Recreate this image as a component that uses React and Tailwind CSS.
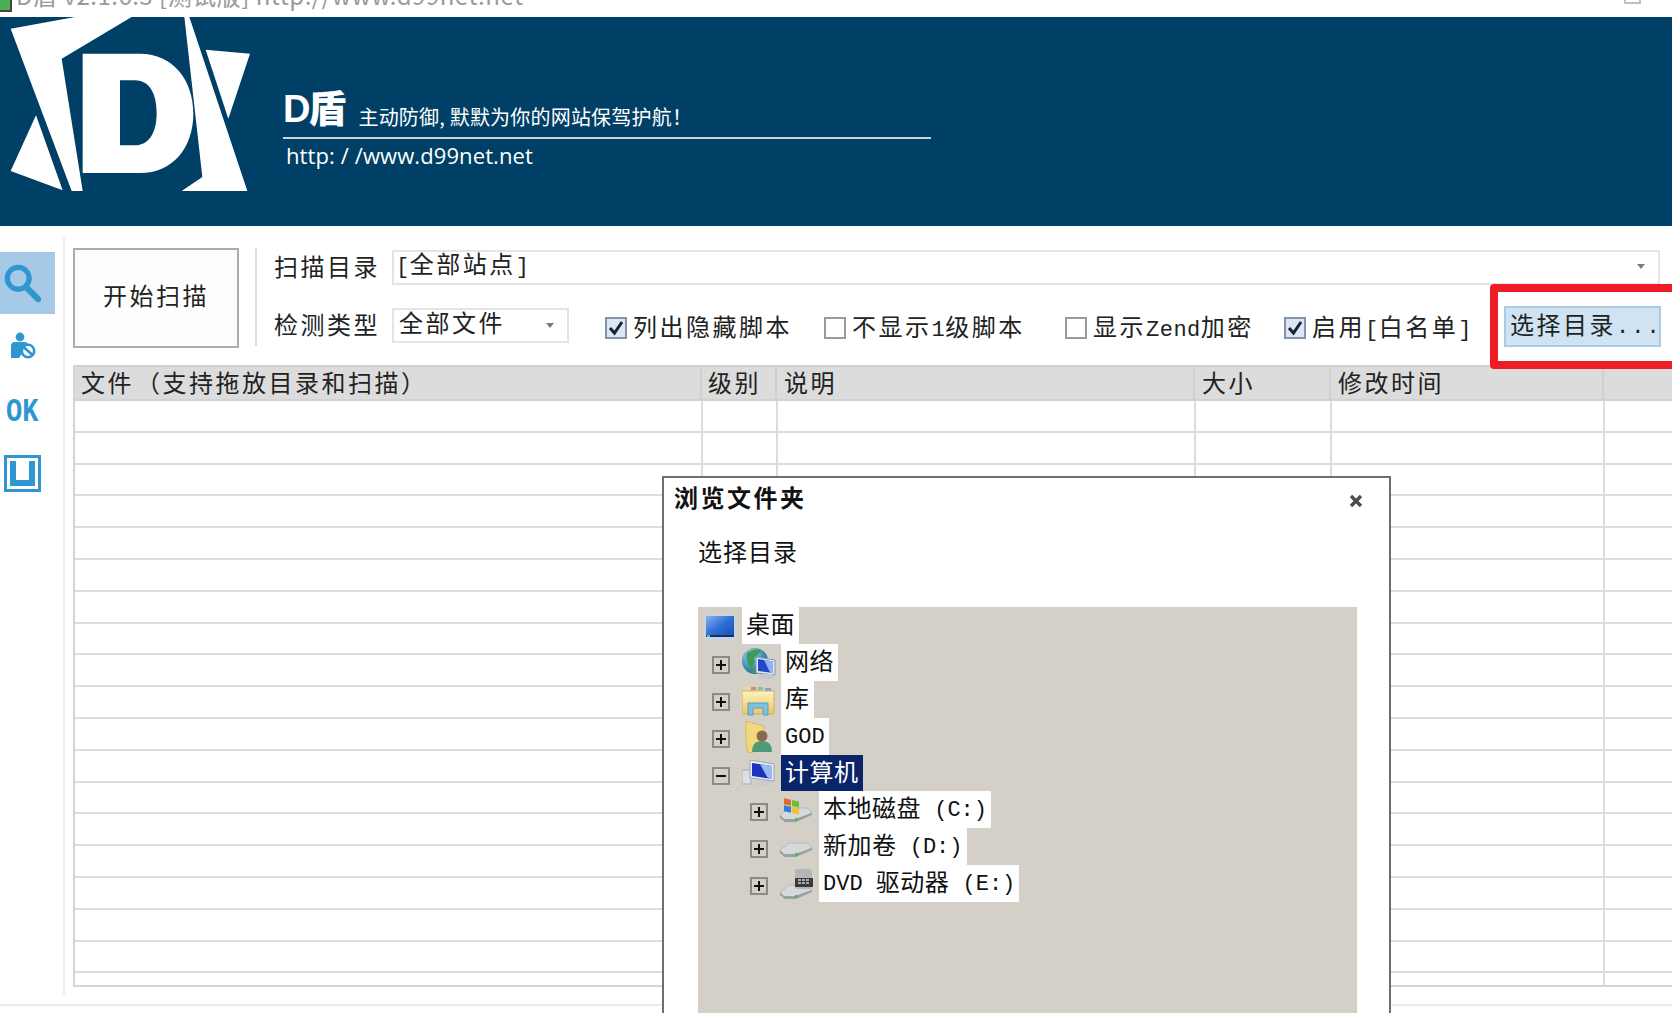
import React from "react";

const rows = Array.from({ length: 18 });

const Mono = ({ children, className = "" }) => (
  <span className={`text-[22px] tracking-[0.5px] whitespace-pre ${className}`}>{children}</span>
);

const Caret = () => (
  <svg width="10" height="6" viewBox="0 0 10 6">
    <polygon points="1,0 9,0 5,5" fill="#7a7a7a" />
  </svg>
);

const Combo = ({ className, children, textClass = "" }) => (
  <div className={`flex items-center justify-between border-2 border-[#e4e4e4] bg-white pl-[5px] ${className}`}>
    <span className={`whitespace-pre ${textClass}`}>{children}</span>
    <Caret />
  </div>
);

const Check = ({ checked, children, className }) => (
  <div className={`mt-[5px] flex items-center ${className}`}>
    {checked ? (
      <div className="flex h-[22px] w-[22px] shrink-0 items-center justify-center border-2 border-[#8593a8] bg-[#dde6f3]">
        <svg width="16" height="16" viewBox="0 0 16 16">
          <path d="M2 8 L6.5 13 L14 2" fill="none" stroke="#14243f" strokeWidth="3" />
        </svg>
      </div>
    ) : (
      <div className="h-[22px] w-[22px] shrink-0 border-2 border-[#9a9a9a] bg-white" />
    )}
    <span className="ml-[6px] whitespace-pre pt-[3px]">{children}</span>
  </div>
);

const DLogo = () => (
  <svg className="shrink-0" width="260" height="209" viewBox="0 50 780 627">
    <g fill="#fff">
      <polygon points="32,85 225,50 395,50 185,175 248,572 215,572" />
      <polygon points="108,345 32,512 188,570" />
      <path
        fillRule="evenodd"
        d="M248 160 H420 C520 160 580 240 580 340 C580 440 520 518 420 518 H248 Z M360 240 V435 H405 C445 435 470 400 470 338 C470 275 445 240 405 240 Z"
      />
      <polygon points="553,50 568,50 742,572 545,572 607,530" />
      <polygon points="617,148 750,160 685,355" />
    </g>
  </svg>
);

const SearchIcon = () => (
  <svg width="38" height="40" viewBox="0 0 40 42">
    <circle cx="16" cy="16" r="11.5" fill="none" stroke="#2f97d0" strokeWidth="5.5" />
    <path d="M25 26 L37 38" stroke="#2f97d0" strokeWidth="6.5" strokeLinecap="round" />
  </svg>
);

const UserBlockIcon = () => (
  <svg width="26" height="27" viewBox="0 0 26 27">
    <circle cx="10" cy="5" r="4.4" fill="#2f97d0" />
    <path d="M1 26 V14 Q1 10 5 10 H15 Q17 10 18 12 L9 26 Z" fill="#2f97d0" />
    <circle cx="18" cy="19" r="6.2" fill="#fff" stroke="#2f97d0" strokeWidth="2.6" />
    <path d="M13.5 15 L22.5 23" stroke="#2f97d0" strokeWidth="2.6" />
  </svg>
);

const BoxIcon = () => (
  <div className="flex h-[37px] w-[37px] items-center justify-center border-[3px] border-[#2f97d0]">
    <svg width="25" height="25" viewBox="0 0 25 25">
      <path d="M3 0 V22 H22 V0" fill="none" stroke="#2f97d0" strokeWidth="6" />
    </svg>
  </div>
);

const SignBox = ({ minus }) => (
  <svg className="mt-[5px] shrink-0" width="18" height="18" viewBox="0 0 18 18">
    <rect x="1" y="1" width="16" height="16" fill="#d4d0c8" stroke="#8c8a84" strokeWidth="2" />
    <path d="M4 9 H14" stroke="#111" strokeWidth="2" />
    {!minus && <path d="M9 4 V14" stroke="#111" strokeWidth="2" />}
  </svg>
);

const DesktopIcon = () => (
  <svg width="32" height="26" viewBox="0 0 32 26">
    <defs>
      <linearGradient id="dsk" x1="0" y1="0" x2="1" y2="1">
        <stop offset="0" stopColor="#8cb4ee" />
        <stop offset="0.5" stopColor="#2f6fd6" />
        <stop offset="1" stopColor="#1b4fae" />
      </linearGradient>
    </defs>
    <rect x="0.5" y="0.5" width="31" height="25" fill="#c6d6ea" />
    <rect x="2" y="2" width="28" height="20" fill="url(#dsk)" />
    <rect x="2" y="21" width="28" height="2" fill="#17305e" />
    <rect x="3" y="21" width="3" height="2" fill="#6cc46c" />
  </svg>
);

const NetworkIcon = () => (
  <svg width="34" height="34" viewBox="0 0 34 34">
    <defs>
      <radialGradient id="glb" cx="0.35" cy="0.3" r="0.8">
        <stop offset="0" stopColor="#8ad8f4" />
        <stop offset="1" stopColor="#0f5c8a" />
      </radialGradient>
    </defs>
    <circle cx="13" cy="14" r="13" fill="url(#glb)" />
    <path d="M5 6 Q12 1 19 3 Q15 9 12 11 Q14 16 9 21 Q3 15 5 6 Z" fill="#3f9a52" />
    <path d="M8 24 Q11 21 15 22 L13 27 Q10 27 8 24 Z" fill="#3f9a52" />
    <path d="M14 10 L33 13 V28 L14 26 Z" fill="#e2e8f1" stroke="#8595ab" strokeWidth="1" />
    <path d="M16 12 L31 14.5 V26 L16 24 Z" fill="#2148c8" />
    <path d="M22 13 L31 14.5 V26 L28 25.6 Z" fill="#93b2f2" />
    <path d="M18 27 H30 L33 32 H16 Z" fill="#c3c8cd" />
  </svg>
);

const LibraryIcon = () => (
  <svg width="33" height="31" viewBox="0 0 33 31">
    <defs>
      <linearGradient id="lib" x1="0" y1="0" x2="0" y2="1">
        <stop offset="0" stopColor="#fdf3bc" />
        <stop offset="1" stopColor="#e9c766" />
      </linearGradient>
    </defs>
    <rect x="2" y="1" width="6" height="4" fill="#e6d79a" />
    <rect x="9" y="2" width="5" height="3" fill="#d98a7a" />
    <rect x="16" y="2" width="5" height="3" fill="#8ac48a" />
    <rect x="23" y="3" width="6" height="3" fill="#7aa8d8" />
    <path d="M0 6 H32 V29 H0 Z" fill="url(#lib)" stroke="#cfb25c" strokeWidth="1" />
    <path d="M6 30 V18 H26 V30 H21 V23 H11 V30 Z" fill="#7fc0dc" stroke="#5a9dbd" strokeWidth="1" />
  </svg>
);

const UserFolderIcon = () => (
  <svg width="30" height="33" viewBox="0 0 30 33">
    <path d="M2 0 L20 5 V29 L4 32 Q1 20 2 0 Z" fill="#f2d77d" stroke="#d9b95c" strokeWidth="1" />
    <circle cx="18" cy="15" r="5.5" fill="#8a6a4e" />
    <path d="M8 31 Q8 20 18 20 Q28 20 28 31 Z" fill="#4f9a76" />
  </svg>
);

const ComputerIcon = () => (
  <svg width="34" height="30" viewBox="0 0 34 30">
    <rect x="0" y="10" width="9" height="14" fill="#dcdfe3" stroke="#a9adb2" strokeWidth="1" />
    <path d="M8 0 L32 4 V21 L8 18 Z" fill="#e8edf4" stroke="#9aa5b5" strokeWidth="1" />
    <path d="M10 3 L30 6 V19 L10 16 Z" fill="#1a33b8" />
    <path d="M18 4 L30 6 V19 L26 18.5 Z" fill="#9ab8f4" />
    <path d="M15 21 H27 L30 26 H13 Z" fill="#c8ccd0" />
  </svg>
);

const DriveBase = ({ y = 13 }) => (
  <g transform={`translate(0 ${y})`}>
    <path d="M0 9 L9 2 H28 L32 7 L15 14 H4 Z" fill="#d6d9dc" stroke="#b4b8bc" strokeWidth="1" />
    <path d="M0 9 V12 L5 16 H16 L32 9 V7 L15 13 H4 Z" fill="#98a0a2" />
    <rect x="15" y="12" width="3" height="3" fill="#58b858" />
  </g>
);

const DriveC = () => (
  <svg width="34" height="30" viewBox="0 0 34 30">
    <DriveBase y={10} />
    <g transform="translate(3 2) skewY(12)">
      <rect x="1" y="0" width="7" height="6" fill="#e06a2c" />
      <rect x="9" y="0" width="7" height="6" fill="#76b83c" />
      <rect x="1" y="7" width="7" height="6" fill="#2f80d0" />
      <rect x="9" y="7" width="7" height="6" fill="#eec230" />
    </g>
  </svg>
);

const DriveD = () => (
  <svg width="34" height="30" viewBox="0 0 34 30">
    <DriveBase y={8} />
  </svg>
);

const DriveDvd = () => (
  <svg width="34" height="34" viewBox="0 0 34 34">
    <DriveBase y={15} />
    <rect x="15" y="1" width="17" height="20" rx="3" fill="#b4b6b8" />
    <rect x="15" y="10" width="18" height="9" fill="#3a3a3a" />
    <path d="M18 12 H30 M18 15 H30" stroke="#d0d0d0" strokeWidth="1.5" strokeDasharray="3 1" />
  </svg>
);

const TreeRow = ({ indent, sign, minus, icon, label, selected, iconClass }) => (
  <div className={`flex h-[36.9px] items-center ${indent}`}>
    {sign && <SignBox minus={minus} />}
    <div className={`mt-[3px] flex shrink-0 items-center ${iconClass}`}>{icon}</div>
    <div
      className={`flex h-full items-center whitespace-pre px-[4px] pt-[3px] ${
        selected ? "bg-[#0a246a] text-white" : "bg-white text-[#111]"
      }`}
    >
      {label}
    </div>
  </div>
);

const TreeMono = ({ children }) => <span className="text-[22px] tracking-normal">{children}</span>;

const App = () => {
  return (
    <div className="relative h-[1013px] w-[1672px] overflow-hidden bg-white text-[24px] leading-none tracking-[2.5px] text-[#222] [font-family:'Liberation_Mono','Noto_Sans_CJK_SC',monospace]">
      {/* title bar, cut by the top of the shot */}
      <div className="flex h-[17px] items-start overflow-hidden">
        <div className="h-[12px] w-[12px] shrink-0 border-b-2 border-r-2 border-[#444] bg-[#4caf50]" />
        <div className="ml-[4px] -mt-[17px] whitespace-pre font-['Noto_Sans_CJK_SC'] text-[24px] tracking-[0.5px] text-[#9a9a9a]">
          D盾 v2.1.6.3 [测试版] http://www.d99net.net
        </div>
        <div className="ml-auto mr-[31px] h-[4px] w-[17px] border-x-2 border-b-2 border-[#c0c0c0]" />
      </div>

      {/* banner */}
      <div className="flex h-[209px] bg-[#003f66]">
        <DLogo />
        <div className="ml-[23px] flex w-[648px] flex-col">
          <div className="mt-[70px] flex h-[52px] items-end border-b-2 border-[#c8d6e0] pb-[9px] text-white">
            <span className="font-['Liberation_Sans','Noto_Sans_CJK_SC'] text-[38px] font-black tracking-[-2px]">D盾</span>
            <span className="mb-[1px] ml-[14px] font-['Noto_Sans_CJK_SC'] text-[20px] tracking-[0.2px]">主动防御, 默默为你的网站保驾护航！</span>
          </div>
          <div className="ml-[3px] mt-[5px] font-['Open_Sans'] text-[22px] tracking-[0.1px] text-white">http: / /www.d99net.net</div>
        </div>
      </div>

      <div className="flex pt-[11px]">
        {/* left icon rail */}
        <div className="flex h-[758px] w-[65px] shrink-0 flex-col border-r-2 border-[#ececec] pr-[8px] pt-[15px]">
          <div className="flex h-[62px] items-center bg-[#a5c9e6] pl-[3px]">
            <SearchIcon />
          </div>
          <div className="flex h-[62px] items-center pl-[10px]">
            <UserBlockIcon />
          </div>
          <div className="flex h-[66px] items-center pl-[6px] pt-[7px]">
            <span className="scale-y-[1.25] text-[27px] font-bold tracking-normal text-[#2f97d0]">OK</span>
          </div>
          <div className="flex h-[62px] items-center pl-[4px]">
            <BoxIcon />
          </div>
        </div>

        <div className="min-w-0 flex-1 pl-[8px] pt-[11px]">
          {/* scan controls */}
          <div className="flex">
            <div className="flex h-[100px] w-[166px] shrink-0 items-center justify-center border-2 border-[#acacac] bg-[#fdfdfd] pt-[1px]">开始扫描</div>
            <div className="ml-[16px] h-[98px] w-[2px] shrink-0 bg-[#dcdcdc]" />
            <div className="ml-[17px] flex-1">
              <div className="mt-[2px] flex h-[34px] items-center">
                <div className="w-[118px] shrink-0 pt-[5px]">扫描目录</div>
                <Combo className="h-[35px] w-[1268px] pr-[12px]" textClass="-ml-[3px]">
                  <Mono>[</Mono>全部站点<Mono>]</Mono>
                </Combo>
              </div>
              <div className="mt-[24px] flex h-[35px] items-center">
                <div className="w-[118px] shrink-0 pt-[5px]">检测类型</div>
                <Combo className="h-[35px] w-[177px] pr-[12px]">全部文件</Combo>
                <Check checked className="ml-[36px] w-[219px]">列出隐藏脚本</Check>
                <Check className="w-[241px]">
                  不显示<Mono>1</Mono>级脚本
                </Check>
                <Check className="w-[219px]">
                  显示<Mono>Zend</Mono>加密
                </Check>
                <Check checked className="w-[220px]">
                  启用<Mono>[</Mono>白名单<Mono>]</Mono>
                </Check>
                <div className="mt-[2px] flex h-[41px] w-[157px] shrink-0 items-center whitespace-pre border-2 border-[#a9cbe8] bg-[#cfe3f3] pl-[4px] pt-[3px]">
                  选择目录<Mono className="tracking-[2px]">...</Mono>
                </div>
              </div>
            </div>
          </div>

          {/* results table */}
          <div className="mt-[17px] h-[622px] border-b-2 border-l-2 border-[#d4d4d4]">
            <div className="flex h-[36px] border-y-2 border-[#d2d2d2] bg-[#dcdcdc] leading-[38px]">
              <div className="w-[627px] shrink-0 border-r-2 border-[#cfcfcf] pl-[6px]">
                文件<span className="ml-[2px]">（支持拖放目录和扫描）</span>
              </div>
              <div className="w-[75px] shrink-0 border-r-2 border-[#cfcfcf] pl-[6px]">级别</div>
              <div className="w-[418px] shrink-0 border-r-2 border-[#cfcfcf] pl-[7px]">说明</div>
              <div className="w-[136px] shrink-0 border-r-2 border-[#cfcfcf] pl-[7px]">大小</div>
              <div className="w-[273px] shrink-0 border-r-2 border-[#cfcfcf] pl-[7px]">修改时间</div>
            </div>
            {rows.map((_, i) => (
              <div key={i} className="flex h-[31.8px] border-b-2 border-[#dfdcd6]">
                <div className="w-[628px] shrink-0 border-r-2 border-[#dfdcd6]" />
                <div className="w-[75px] shrink-0 border-r-2 border-[#dfdcd6]" />
                <div className="w-[418px] shrink-0 border-r-2 border-[#dfdcd6]" />
                <div className="w-[136px] shrink-0 border-r-2 border-[#dfdcd6]" />
                <div className="w-[273px] shrink-0 border-r-2 border-[#dfdcd6]" />
              </div>
            ))}
            <div className="flex h-[12px]">
              <div className="w-[628px] shrink-0 border-r-2 border-[#dfdcd6]" />
              <div className="w-[75px] shrink-0 border-r-2 border-[#dfdcd6]" />
              <div className="w-[418px] shrink-0 border-r-2 border-[#dfdcd6]" />
              <div className="w-[136px] shrink-0 border-r-2 border-[#dfdcd6]" />
              <div className="w-[273px] shrink-0 border-r-2 border-[#dfdcd6]" />
            </div>
          </div>
        </div>
      </div>

      <div className="mt-[9px] h-[2px] bg-[#ebebeb]" />

      {/* red annotation around the button */}
      <div className="absolute left-[1490px] top-[284px] h-[85px] w-[220px] rounded-[4px] border-[8px] border-[#ee1c25]" />

      {/* browse-folder dialog */}
      <div className="absolute left-[662px] top-[476px] h-[560px] w-[729px] border-2 border-[#6e6e6e] bg-white tracking-normal text-[#111]">
        <div className="flex h-[46px] items-center justify-between pl-[10px] pr-[26px]">
          <span className="font-bold tracking-[2.5px]">浏览文件夹</span>
          <svg width="14" height="14" viewBox="0 0 14 14">
            <path d="M2 2 L12 12 M12 2 L2 12" stroke="#4a4a4a" strokeWidth="3.2" />
          </svg>
        </div>
        <div className="ml-[34px] mt-[19px] h-[26px] tracking-[1px]">选择目录</div>
        <div className="ml-[34px] mt-[38px] h-[440px] w-[659px] bg-[#d4d0c8] tracking-[0.5px]">
          <TreeRow indent="pl-[6px]" iconClass="w-[38px]" icon={<DesktopIcon />} label="桌面" />
          <TreeRow indent="pl-[14px]" sign iconClass="ml-[12px] w-[39px]" icon={<NetworkIcon />} label="网络" />
          <TreeRow indent="pl-[14px]" sign iconClass="ml-[12px] w-[39px]" icon={<LibraryIcon />} label="库" />
          <TreeRow
            indent="pl-[14px]"
            sign
            iconClass="ml-[14px] w-[37px]"
            icon={<UserFolderIcon />}
            label={<TreeMono>GOD</TreeMono>}
          />
          <TreeRow indent="pl-[14px]" sign minus selected iconClass="ml-[12px] w-[39px]" icon={<ComputerIcon />} label="计算机" />
          <TreeRow
            indent="pl-[52px]"
            sign
            iconClass="ml-[12px] w-[39px]"
            icon={<DriveC />}
            label={
              <>
                本地磁盘<TreeMono> (C:)</TreeMono>
              </>
            }
          />
          <TreeRow
            indent="pl-[52px]"
            sign
            iconClass="ml-[12px] w-[39px]"
            icon={<DriveD />}
            label={
              <>
                新加卷<TreeMono> (D:)</TreeMono>
              </>
            }
          />
          <TreeRow
            indent="pl-[52px]"
            sign
            iconClass="ml-[12px] w-[39px]"
            icon={<DriveDvd />}
            label={
              <>
                <TreeMono>DVD </TreeMono>驱动器<TreeMono> (E:)</TreeMono>
              </>
            }
          />
        </div>
      </div>
    </div>
  );
};

export default App;
